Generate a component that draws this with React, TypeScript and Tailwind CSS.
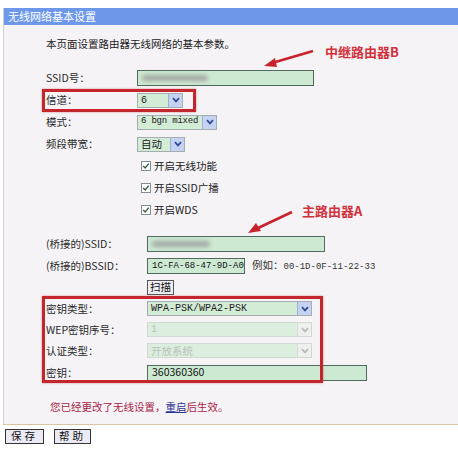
import React from 'react';

const cjk = { fontFamily: '"Noto Sans CJK SC", "Liberation Sans", sans-serif' };
const mono = { fontFamily: '"Liberation Mono", "Noto Sans CJK SC", monospace' };

const Chevron = ({ disabled }: { disabled?: boolean }) => (
  <div
    className={`flex h-full w-[14px] shrink-0 items-center justify-center border-l ${
      disabled ? 'border-[#d8dcd8] bg-[#eef0ee]' : 'border-[#9fb0d8] bg-[#c6d2f2]'
    }`}
  >
    <svg width="8" height="6" viewBox="0 0 8 6">
      <path d="M1 1.2 L4 4.4 L7 1.2" fill="none" stroke={disabled ? '#b8bcb8' : '#2d4b9c'} strokeWidth="1.7" />
    </svg>
  </div>
);

const Select = ({
  value,
  width,
  disabled,
  latin,
  small,
}: {
  value: string;
  width: string;
  disabled?: boolean;
  latin?: boolean;
  small?: boolean;
}) => (
  <div
    className={`flex h-[15px] items-stretch border ${width} ${
      disabled ? 'border-[#d4d8d4] bg-[#dcefdf] text-[#b9c2bb]' : 'border-[#a6adb0] bg-[#d3ecd6] text-[#222]'
    }`}
  >
    <div
      className={`flex flex-1 items-center whitespace-nowrap pl-[3px] ${
        latin ? (small ? 'text-[9px] tracking-[-0.2px]' : 'text-[10px]') : 'text-[10.5px]'
      }`}
      style={latin ? mono : undefined}
    >
      {value}
    </div>
    <Chevron disabled={disabled} />
  </div>
);

const Input = ({ width, children }: { width: string; children?: React.ReactNode }) => (
  <div className={`flex h-[16px] items-center border border-[#4f6a5e] bg-[#cde9d1] pl-[4px] ${width}`}>
    {children}
  </div>
);

const Blur = ({ width }: { width: string }) => (
  <div className={`h-[6px] rounded-full bg-[#a3aaa6] blur-[2px] ${width}`} />
);

const Check = ({ label }: { label: React.ReactNode }) => (
  <div className="flex items-center gap-[3px] pl-[4px]">
    <div className="flex h-[10px] w-[10px] items-center justify-center border border-[#7f8d98] bg-white">
      <svg width="8" height="8" viewBox="0 0 8 8">
        <path d="M1.2 4 L3.2 6 L6.8 1.6" fill="none" stroke="#3c5a3c" strokeWidth="1.4" />
      </svg>
    </div>
    <span className="text-[10.5px] text-[#222]">{label}</span>
  </div>
);

const Row = ({
  label,
  labelWidth,
  height = 'h-[22px]',
  children,
}: {
  label?: React.ReactNode;
  labelWidth: string;
  height?: string;
  children: React.ReactNode;
}) => (
  <div className={`flex items-center ${height}`}>
    <div className={`${labelWidth} text-[10.5px] text-[#2a2a2a]`}>{label}</div>
    <div className="flex items-center gap-[7px]">{children}</div>
  </div>
);

export default function App() {
  return (
    <div className="relative h-[452px] w-[458px] overflow-hidden bg-white" style={cjk}>
      <div className="h-[8px]" />
      <div className="ml-[3px] flex h-[417px] flex-col border-b border-l border-[#dcc3a4] border-l-[#cfcfcf] bg-[#f5f3f6]">
        <div className="flex h-[17px] items-center bg-[#6d98ea] pl-[4px] text-[11px] text-white">无线网络基本设置</div>

        <div className="mt-[8px] flex h-[22px] items-center pl-[42px] text-[10.5px] text-[#222]">
          本页面设置路由器无线网络的基本参数。
        </div>

        <div className="mt-[12px] pl-[42px]">
          <Row label="SSID号：" labelWidth="w-[91px]">
            <Input width="w-[177px]">
              <Blur width="w-[66px]" />
            </Input>
          </Row>
          <Row label="信道：" labelWidth="w-[91px]">
            <Select value="6" width="w-[46px]" latin />
          </Row>
          <Row label="模式：" labelWidth="w-[91px]">
            <Select value="6 bgn mixed" width="w-[80px]" latin small />
          </Row>
          <Row label="频段带宽：" labelWidth="w-[91px]">
            <Select value="自动" width="w-[48px]" />
          </Row>
          <Row labelWidth="w-[91px]">
            <Check label="开启无线功能" />
          </Row>
          <Row labelWidth="w-[91px]">
            <Check label="开启SSID广播" />
          </Row>
          <Row labelWidth="w-[91px]">
            <Check label="开启WDS" />
          </Row>
        </div>

        <div className="mt-[12px] pl-[42px]">
          <Row label="(桥接的)SSID：" labelWidth="w-[101px]">
            <Input width="w-[178px]">
              <Blur width="w-[58px]" />
            </Input>
          </Row>
          <Row label="(桥接的)BSSID：" labelWidth="w-[101px]">
            <Input width="w-[98px]">
              <span className="whitespace-nowrap text-[9px] leading-none text-[#111]" style={mono}>
                1C-FA-68-47-9D-A0
              </span>
            </Input>
            <span className="whitespace-nowrap text-[10.5px] text-[#333]">
              例如：<span className="text-[9px]" style={mono}>00-1D-0F-11-22-33</span>
            </span>
          </Row>
          <Row labelWidth="w-[101px]" height="h-[21px]">
            <button className="flex h-[15px] items-center border border-[#555] bg-[#ececf2] px-[2px] text-[10.5px] leading-none text-[#111]">
              扫描
            </button>
          </Row>
          <Row label="密钥类型：" labelWidth="w-[101px]" height="h-[21px]">
            <Select value="WPA-PSK/WPA2-PSK" width="w-[165px]" latin />
          </Row>
          <Row label="WEP密钥序号：" labelWidth="w-[101px]" height="h-[21px]">
            <Select value="1" width="w-[165px]" disabled latin />
          </Row>
          <Row label="认证类型：" labelWidth="w-[101px]" height="h-[21px]">
            <Select value="开放系统" width="w-[165px]" disabled />
          </Row>
          <Row label="密钥：" labelWidth="w-[101px]" height="h-[23px]">
            <Input width="w-[220px]">
              <span className="text-[10.5px] leading-none text-[#111]">360360360</span>
            </Input>
          </Row>
        </div>

        <div className="mt-[12px] flex h-[22px] items-center pl-[46px] text-[10.5px] text-[#a8264a]">
          您已经更改了无线设置，<span className="text-[#2e3590] underline">重启</span>后生效。
        </div>
      </div>

      <div className="mt-[4px] flex gap-[10px] pl-[5px]">
        <button className="flex h-[15px] w-[39px] items-center justify-center border border-[#333] bg-[#eceaf4] text-[10.5px] leading-none tracking-[3px] text-[#111]">
          保存
        </button>
        <button className="flex h-[15px] w-[37px] items-center justify-center border border-[#333] bg-[#eceaf4] text-[10.5px] leading-none tracking-[3px] text-[#111]">
          帮助
        </button>
      </div>

      {/* annotations */}
      <div className="absolute left-[42px] top-[89px] h-[23px] w-[154px] border-[3px] border-[#c4262e] shadow-[0_0_2px_rgba(196,38,46,0.5)]" />
      <div className="absolute left-[42px] top-[296px] h-[87px] w-[281px] border-[3px] border-[#c4262e] shadow-[0_0_2px_rgba(196,38,46,0.5)]" />

      <div className="absolute left-[325px] top-[42px] text-[13px] font-bold text-[#d2303a]">中继路由器B</div>
      <div className="absolute left-[302px] top-[201px] text-[13px] font-bold text-[#d2303a]">主路由器A</div>

      <svg className="absolute left-0 top-0" width="458" height="452">
        <line x1="313" y1="51" x2="272" y2="63" stroke="#c8232d" strokeWidth="2.5" />
        <path d="M264 66 L275 58 L277 67 Z" fill="#c8232d" />
        <line x1="292" y1="212" x2="256" y2="229" stroke="#c8232d" strokeWidth="2.5" />
        <path d="M248 233 L256 223 L261 231 Z" fill="#c8232d" />
      </svg>
    </div>
  );
}
